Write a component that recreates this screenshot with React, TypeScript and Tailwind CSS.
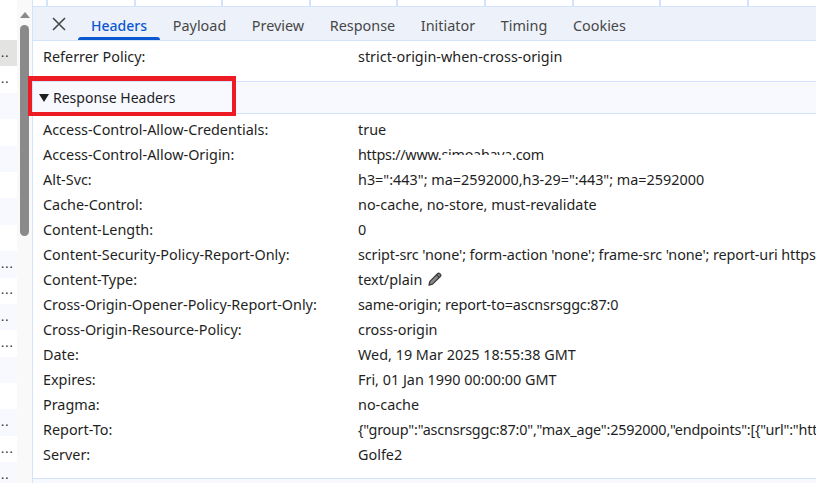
import React from "react";

const FONT = "font-['Noto_Sans','Open_Sans',sans-serif]";

const rows: [string, string, string][] = [
  ["Access-Control-Allow-Credentials:", "true", ""],
  ["Access-Control-Allow-Origin:", "https://www.simoahava.com", "tracking-[-0.28px]"],
  ["Alt-Svc:", 'h3=":443"; ma=2592000,h3-29=":443"; ma=2592000', ""],
  ["Cache-Control:", "no-cache, no-store, must-revalidate", ""],
  ["Content-Length:", "0", ""],
  ["Content-Security-Policy-Report-Only:", "script-src 'none'; form-action 'none'; frame-src 'none'; report-uri https", "tracking-[-0.1px]"],
  ["Content-Type:", "text/plain", ""],
  ["Cross-Origin-Opener-Policy-Report-Only:", "same-origin; report-to=ascnsrsggc:87:0", "tracking-[-0.13px]"],
  ["Cross-Origin-Resource-Policy:", "cross-origin", ""],
  ["Date:", "Wed, 19 Mar 2025 18:55:38 GMT", ""],
  ["Expires:", "Fri, 01 Jan 1990 00:00:00 GMT", ""],
  ["Pragma:", "no-cache", ""],
  ["Report-To:", '{"group":"ascnsrsggc:87:0","max_age":2592000,"endpoints":[{"url":"htt', "tracking-[-0.2px]"],
  ["Server:", "Golfe2", ""],
];

const tabs = ["Headers", "Payload", "Preview", "Response", "Initiator", "Timing", "Cookies"];

// 17 request-list rows: "" means no visible text tail in the narrow column.
const listRows = ["..", "..", "", "", "", "", "", "", "...", "...", "..", "...", "", "", "..", "...", ".."];

function Row({ k, v, t }: { k: string; v: string; t: string }) {
  return (
    <div className="flex h-[25px] items-center whitespace-nowrap pl-[10px]">
      <div className="w-[315px] shrink-0">{k}</div>
      <div className={`flex items-center ${t}`}>
        {v}
        {k === "Content-Type:" && (
          <svg className="ml-[5px]" width="16" height="16" viewBox="0 0 16 16">
            <path d="M2 14l.9-3.6 7.9-7.9a1.2 1.2 0 0 1 1.7 0l1 1a1.2 1.2 0 0 1 0 1.7l-7.9 7.9z" fill="#8a8a8a" stroke="#3c3c3c" strokeWidth="1.3" strokeLinejoin="round" />
            <path d="M9.6 3.8l2.6 2.6" stroke="#3c3c3c" strokeWidth="1.3" />
          </svg>
        )}
      </div>
    </div>
  );
}

export default function App() {
  return (
    <div className={`${FONT} relative flex h-[483px] w-[816px] overflow-hidden bg-white text-[14.4px] text-[#1f1f1f]`}>
      <div className="flex w-[17px] shrink-0 flex-col overflow-hidden pt-[40px] text-[12px] leading-none">
        {listRows.map((d, i) => (
          <div
            key={i}
            className={`flex h-[26.4px] shrink-0 items-center pb-[1px] pl-[1px] tracking-[1px] ${i === 0 ? "bg-[#e3e4e1]" : i % 2 === 0 ? "bg-[#f8f9ff]" : "bg-white"}`}
          >
            {d}
          </div>
        ))}
      </div>
      <div className="w-[15px] shrink-0 bg-[#f9f9f9]">
        <div className="ml-[3px] mt-[12px] h-0 w-0 border-x-[5px] border-b-[6px] border-x-transparent border-b-[#8a8a8a]" />
        <div className="ml-[3px] mt-[7px] h-[211px] w-[9px] rounded-full bg-[#8a8a8a]" />
      </div>
      <div className="flex min-w-0 flex-1 flex-col border-l border-[#d3e3fd]">
        <div className="flex h-[6px] shrink-0">
          <div className="w-[15px] shrink-0 border-r-2 border-[#d3e3fd]" />
          {[0, 1, 2, 3, 4, 5, 6, 7].map((i) => (
            <div key={i} className="w-[87.6px] shrink-0 border-r-2 border-[#d3e3fd]" />
          ))}
        </div>
        <div className="flex h-[35px] shrink-0 items-stretch border-y border-[#d3e3fd] bg-[#edf2fa] pt-[1px] text-[#474747]">
          <div className="flex w-[45px] items-center pl-[19px]">
            <svg width="14" height="14" viewBox="0 0 14 14">
              <path d="M1 1l12 12M13 1L1 13" stroke="#474747" strokeWidth="1.6" />
            </svg>
          </div>
          {tabs.map((t, i) => (
            <div
              key={t}
              className={`relative flex items-center pt-[3px] ${i === 0 ? "px-[13px] text-[14px] font-medium text-[#0b57d0]" : "px-[12.8px]"}`}
            >
              {t}
              {i === 0 && <div className="absolute inset-x-0 bottom-0 h-[3px] rounded-t-[3px] bg-[#0b57d0]" />}
            </div>
          ))}
        </div>
        <div className="flex h-[40px] shrink-0 items-start whitespace-nowrap pl-[10px] pt-[5px]">
          <div className="w-[315px]">Referrer Policy:</div>
          <div>strict-origin-when-cross-origin</div>
        </div>
        <div className="flex h-[33px] shrink-0 items-center border-y border-[#d3e3fd] bg-[#f8f9ff] pl-[6px] text-[14px]">
          <span className="mr-[4px] inline-block h-0 w-0 border-x-[5px] border-t-[8px] border-x-transparent border-t-[#1f1f1f]" />
          Response Headers
        </div>
        <div className="shrink-0 pt-[3px]">
          {rows.map(([k, v, t]) => (
            <Row key={k} k={k} v={v} t={t} />
          ))}
        </div>
        <div className="mt-[11px] flex-1 border-t border-[#d3e3fd] bg-[#f8f9ff]" />
      </div>
      <div className="absolute left-[28px] top-[76px] h-[40px] w-[208px] border-[4px] border-t-[5px] border-[#ed1c24]" />
      <div className="absolute left-[441px] top-[155px] h-[8px] w-[72px] bg-white" />
    </div>
  );
}
